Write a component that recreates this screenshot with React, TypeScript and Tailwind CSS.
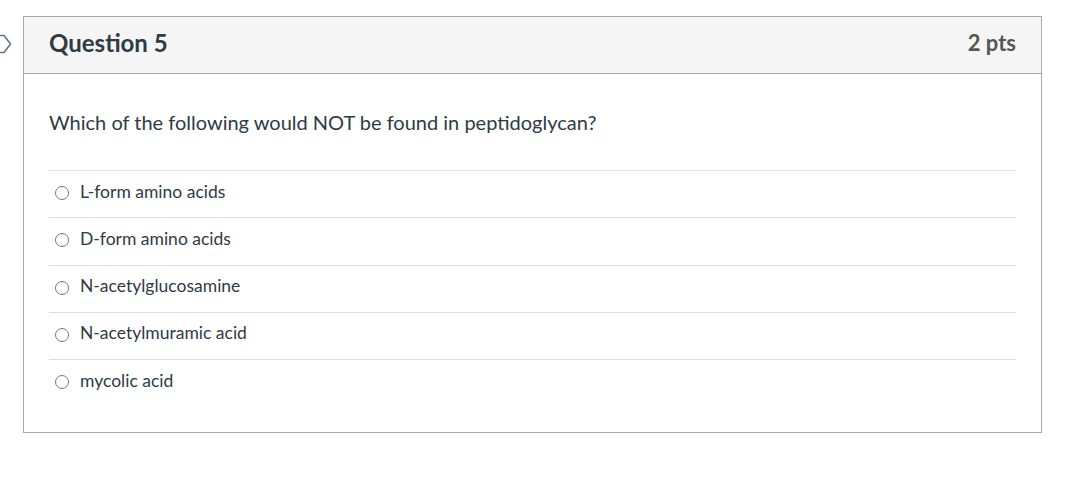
import React from "react";

const answers = [
  "L-form amino acids",
  "D-form amino acids",
  "N-acetylglucosamine",
  "N-acetylmuramic acid",
  "mycolic acid",
];

export default function App() {
  return (
    <div className="w-[1068px] h-[477px] bg-white relative" style={{ fontFamily: "Lato, 'Noto Sans', sans-serif" }}>
      <svg className="absolute left-0 top-[34px]" width="12" height="20" viewBox="0 0 12 20">
        <path d="M-4 1.5 H4 L10.5 10 L4 18.5 H-4" fill="none" stroke="#5b7a97" strokeWidth="1.6" strokeLinejoin="round" />
      </svg>
      <div className="pt-[16px] pl-[23px]">
        <div className="w-[1019px] h-[417px] border border-[#aaaaaa]">
          <div className="h-[57px] bg-[#f5f5f5] border-b border-[#aaaaaa] flex items-center justify-between pl-[25px] pr-[25px]">
            <span className="text-[24px] font-bold text-[#2d3b45] pb-[4px] leading-[28px]">Question 5</span>
            <span className="text-[22px] font-bold text-[#555555] pb-[4px] leading-[28px]">2 pts</span>
          </div>
          <div className="px-[25px]">
            <div className="text-[20px] text-[#2d3b45] pt-[35px] pb-[35px] leading-[26px]">
              Which of the following would NOT be found in peptidoglycan?
            </div>
            <div>
              {answers.map((a) => (
                <div key={a} className="border-t border-[#dddddd] h-[47.25px] flex items-center">
                  <span className="ml-[6px] w-[14px] h-[14px] rounded-full border border-[#777777] shrink-0 mb-[2px]" />
                  <span className="ml-[11px] text-[17.5px] text-[#2d3b45] pb-[5px] leading-[22px]">{a}</span>
                </div>
              ))}
            </div>
          </div>
        </div>
      </div>
    </div>
  );
}
